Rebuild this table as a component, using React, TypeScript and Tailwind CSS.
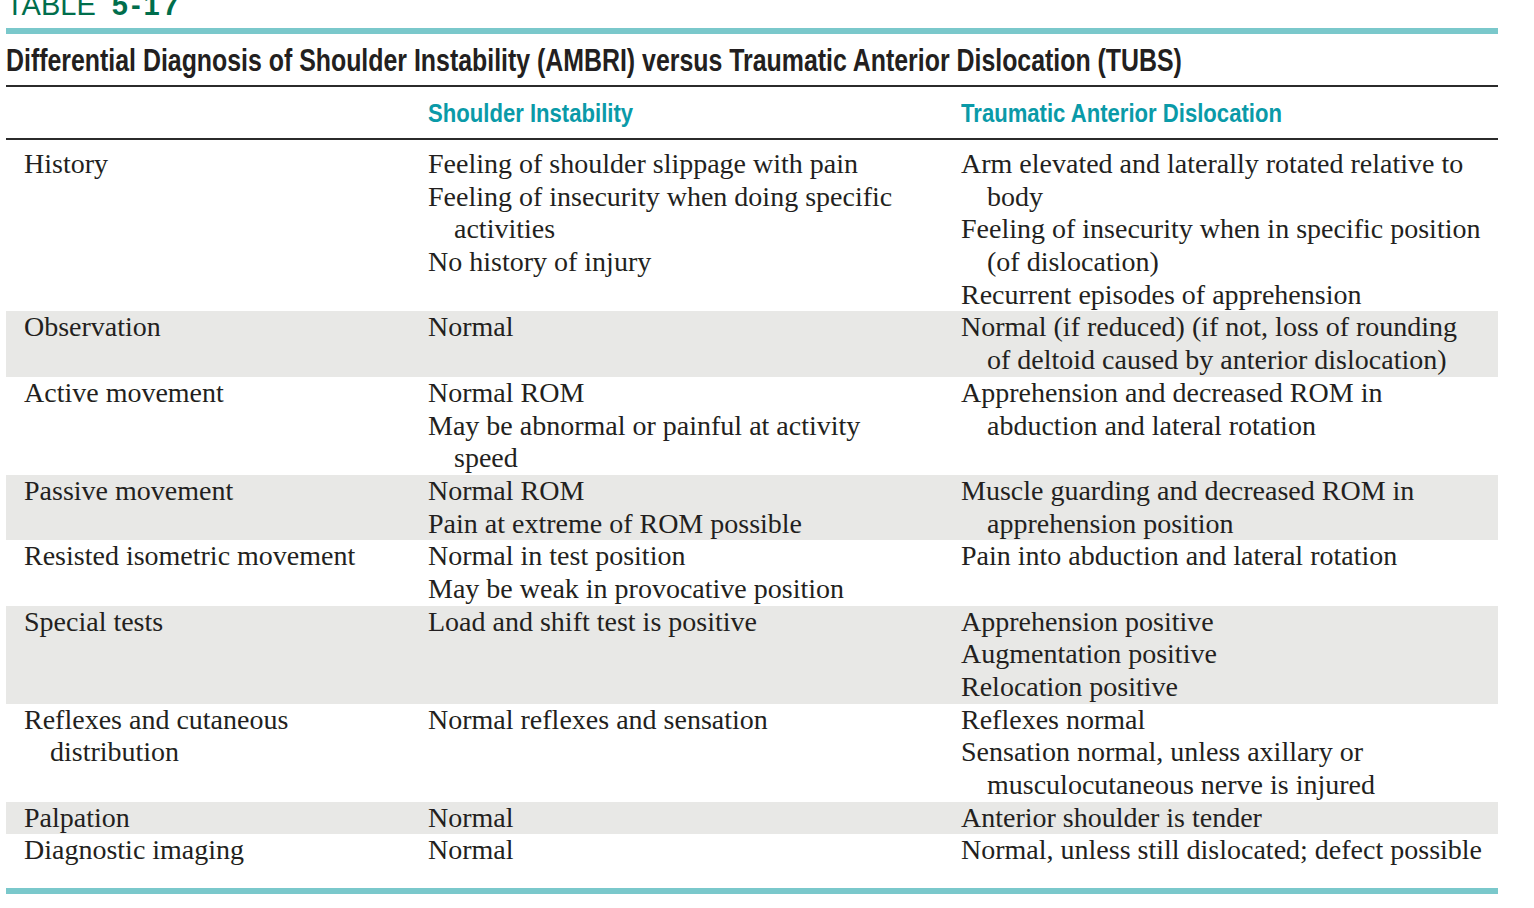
type Cell = string[][];
type Row = { label: Cell; a: Cell; b: Cell; shaded?: boolean };

const rows: Row[] = [
  {
    label: [['History']],
    a: [
      ['Feeling of shoulder slippage with pain'],
      ['Feeling of insecurity when doing specific', 'activities'],
      ['No history of injury'],
    ],
    b: [
      ['Arm elevated and laterally rotated relative to', 'body'],
      ['Feeling of insecurity when in specific position', '(of dislocation)'],
      ['Recurrent episodes of apprehension'],
    ],
  },
  {
    label: [['Observation']],
    a: [['Normal']],
    b: [['Normal (if reduced) (if not, loss of rounding', 'of deltoid caused by anterior dislocation)']],
    shaded: true,
  },
  {
    label: [['Active movement']],
    a: [['Normal ROM'], ['May be abnormal or painful at activity', 'speed']],
    b: [['Apprehension and decreased ROM in', 'abduction and lateral rotation']],
  },
  {
    label: [['Passive movement']],
    a: [['Normal ROM'], ['Pain at extreme of ROM possible']],
    b: [['Muscle guarding and decreased ROM in', 'apprehension position']],
    shaded: true,
  },
  {
    label: [['Resisted isometric movement']],
    a: [['Normal in test position'], ['May be weak in provocative position']],
    b: [['Pain into abduction and lateral rotation']],
  },
  {
    label: [['Special tests']],
    a: [['Load and shift test is positive']],
    b: [['Apprehension positive'], ['Augmentation positive'], ['Relocation positive']],
    shaded: true,
  },
  {
    label: [['Reflexes and cutaneous', 'distribution']],
    a: [['Normal reflexes and sensation']],
    b: [['Reflexes normal'], ['Sensation normal, unless axillary or', 'musculocutaneous nerve is injured']],
  },
  {
    label: [['Palpation']],
    a: [['Normal']],
    b: [['Anterior shoulder is tender']],
    shaded: true,
  },
  {
    label: [['Diagnostic imaging']],
    a: [['Normal']],
    b: [['Normal, unless still dislocated; defect possible']],
  },
];

function CellLines({ cell }: { cell: Cell }) {
  return (
    <div className="pl-[18px]">
      {cell.map((item, i) => (
        <div key={i}>
          {item.map((line, j) => (
            <div key={j} className={`whitespace-nowrap h-[32.7px] ${j > 0 ? 'pl-[26px]' : ''}`}>
              {line}
            </div>
          ))}
        </div>
      ))}
    </div>
  );
}

export default function App() {
  return (
    <div className="w-[1534px] h-[908px] bg-white overflow-hidden text-[#231f20]">
      <div className="ml-[6px] w-[1492px]">
        <div className="-mt-[9px] h-[25px] leading-none text-[29px] text-[#006e4c] font-['Liberation_Sans',sans-serif] whitespace-nowrap">
          TABLE <span className="ml-[8px] font-bold tracking-[3px]">5-17</span>
        </div>
        <div className="mt-[12px] h-[6px] bg-[#7ac8cb]" />
        <div className="h-[51px] pt-[11px] leading-none text-[30.5px] font-bold whitespace-nowrap font-['Liberation_Sans',sans-serif]">
          <span className="inline-block origin-left scale-x-[0.816]">
            Differential Diagnosis of Shoulder Instability (AMBRI) versus Traumatic Anterior Dislocation (TUBS)
          </span>
        </div>
        <div className="h-[2px] bg-[#2b2b2b]" />
        <div className="h-[51px] pt-[13px] grid grid-cols-[404px_533px_555px] leading-none text-[26px] font-bold text-[#0a9aa8] whitespace-nowrap font-['Liberation_Sans',sans-serif]">
          <div />
          <div className="pl-[18px]">
            <span className="inline-block origin-left scale-x-[0.85]">Shoulder Instability</span>
          </div>
          <div className="pl-[18px]">
            <span className="inline-block origin-left scale-x-[0.85]">Traumatic Anterior Dislocation</span>
          </div>
        </div>
        <div className="h-[2px] bg-[#2b2b2b]" />
        <div className="pt-[8px] pb-[21px] text-[28px] leading-[32.7px] font-['Liberation_Serif',serif]">
          {rows.map((r, i) => (
            <div
              key={i}
              className={`grid grid-cols-[404px_533px_555px] ${r.shaded ? 'bg-[#e8e8e6]' : ''}`}
            >
              <CellLines cell={r.label} />
              <CellLines cell={r.a} />
              <CellLines cell={r.b} />
            </div>
          ))}
        </div>
        <div className="h-[6px] bg-[#7ac8cb]" />
      </div>
    </div>
  );
}
